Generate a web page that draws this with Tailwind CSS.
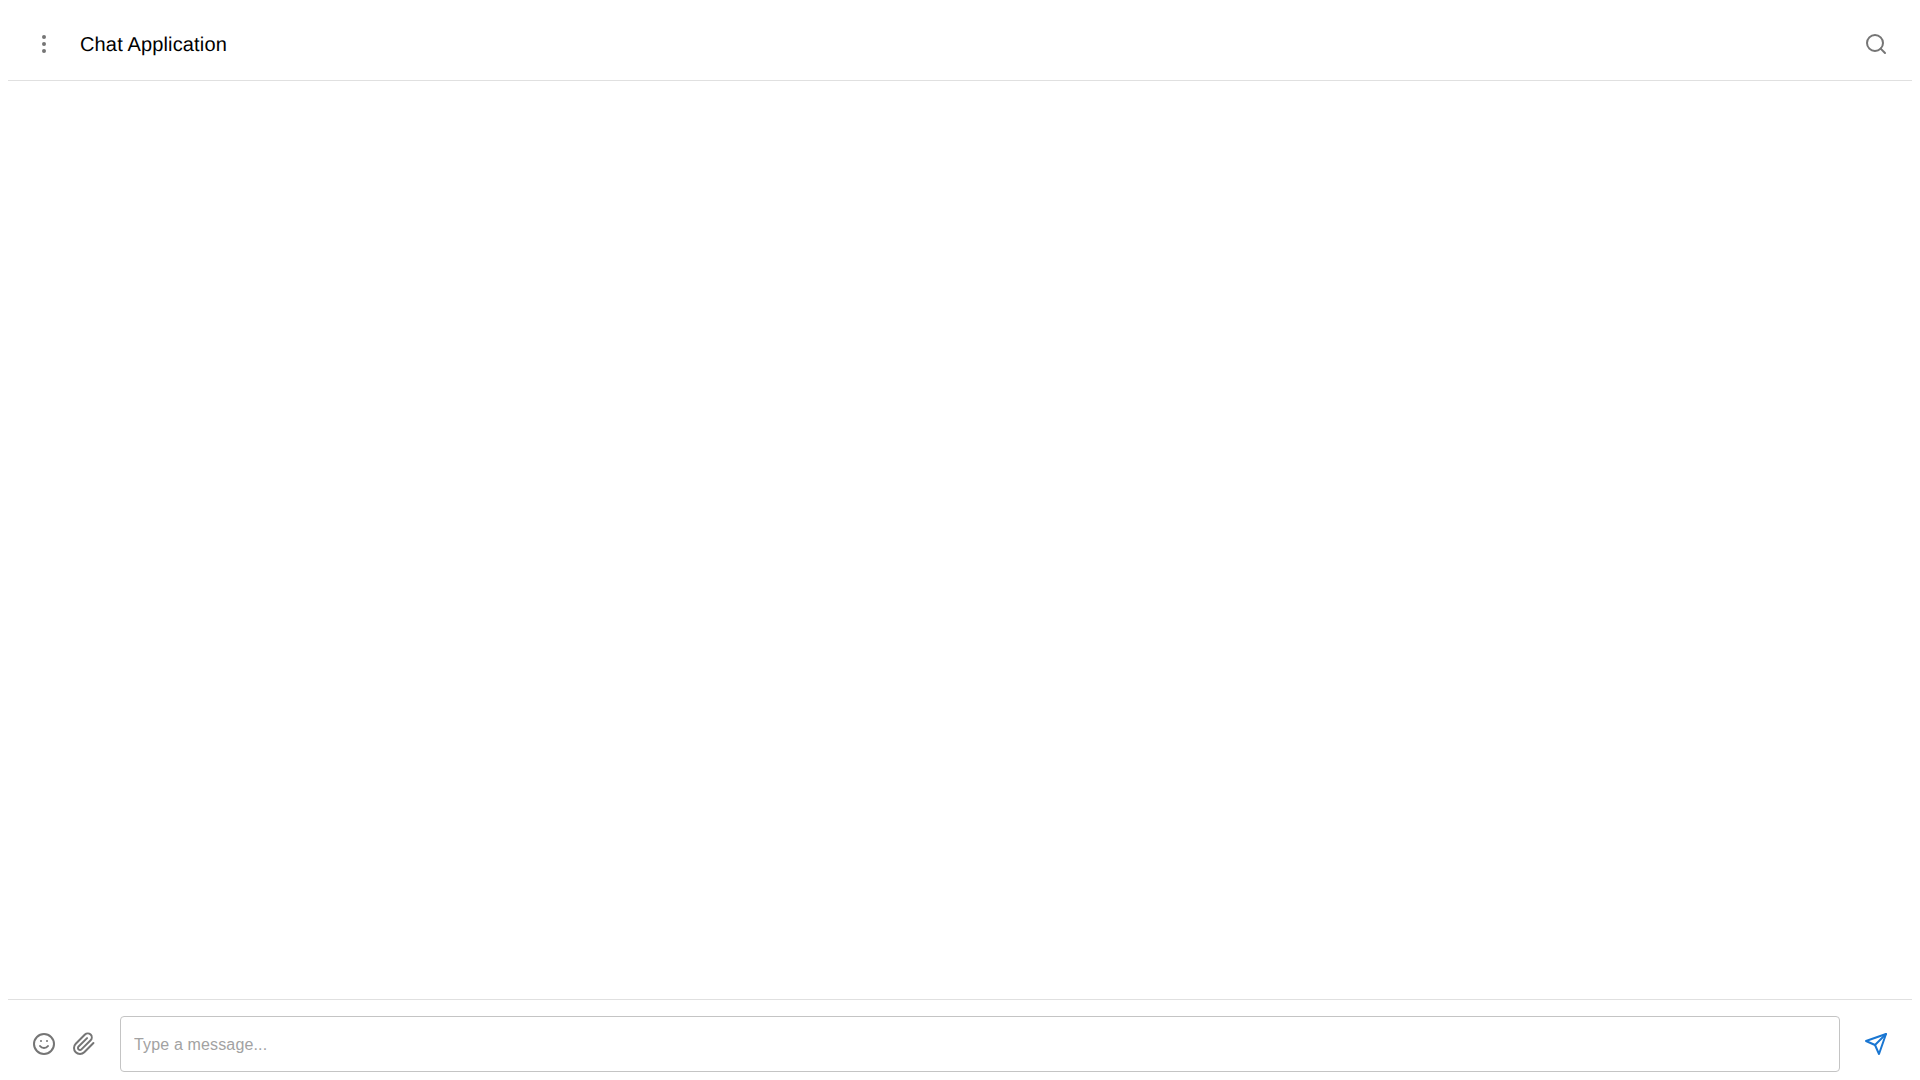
<!DOCTYPE html>
<html lang="en">
<head>
    <meta charset="UTF-8">
    <meta name="viewport" content="width=device-width, initial-scale=1.0">
    <title>Chat Application</title>
    <script src="https://cdn.jsdelivr.net/npm/@tailwindcss/browser@4"></script>
</head>
<body class="bg-white font-['Liberation_Sans',Arial,sans-serif] [text-rendering:geometricPrecision] overflow-hidden">
    <div class="h-screen p-2 pb-0 flex flex-col">
        <!-- header -->
        <header class="h-[73px] shrink-0 flex items-center justify-between px-4 border-b border-[#e0e0e0]">
            <div class="flex items-center gap-4">
                <button class="w-10 h-10 flex items-center justify-center text-[#757575]">
                    <svg class="w-6 h-6" viewBox="0 0 24 24" fill="none" stroke="currentColor" stroke-width="2" stroke-linecap="round" stroke-linejoin="round"><circle cx="12" cy="12" r="1"/><circle cx="12" cy="5" r="1"/><circle cx="12" cy="19" r="1"/></svg>
                </button>
                <h1 class="mt-0.5 text-[20px] leading-6 font-medium tracking-[0.15px] text-black">Chat Application</h1>
            </div>
            <button class="w-10 h-10 flex items-center justify-center text-[#757575]">
                <svg class="w-6 h-6" viewBox="0 0 24 24" fill="none" stroke="currentColor" stroke-width="2" stroke-linecap="round" stroke-linejoin="round"><circle cx="11" cy="11" r="8"/><line x1="21" y1="21" x2="16.65" y2="16.65"/></svg>
            </button>
        </header>

        <!-- messages -->
        <main class="flex-1"></main>

        <!-- input bar -->
        <footer class="h-[81px] shrink-0 flex items-start px-4 pt-4 border-t border-[#e0e0e0]">
            <button class="w-10 h-14 flex items-center justify-center text-[#757575]">
                <svg class="w-6 h-6" viewBox="0 0 24 24" fill="none" stroke="currentColor" stroke-width="2" stroke-linecap="round" stroke-linejoin="round"><circle cx="12" cy="12" r="10"/><path d="M8 14s1.5 2 4 2 4-2 4-2"/><line x1="9" y1="9" x2="9.01" y2="9"/><line x1="15" y1="9" x2="15.01" y2="9"/></svg>
            </button>
            <button class="w-10 h-14 flex items-center justify-center text-[#757575]">
                <svg class="w-6 h-6" viewBox="0 0 24 24" fill="none" stroke="currentColor" stroke-width="2" stroke-linecap="round" stroke-linejoin="round"><path d="M21.44 11.05l-9.19 9.19a6 6 0 0 1-8.49-8.49l9.19-9.19a4 4 0 0 1 5.66 5.66l-9.2 9.19a2 2 0 0 1-2.83-2.83l8.49-8.48"/></svg>
            </button>
            <input type="text" placeholder="Type a message..." class="flex-1 h-14 mx-4 pl-[13px] pr-[13px] pt-px text-base tracking-[0.15px] text-black border border-[#c4c4c4] rounded placeholder:text-[#a2a2a2] outline-none">
            <button class="w-10 h-14 flex items-center justify-center text-[#1976d2]">
                <svg class="w-6 h-6" viewBox="0 0 24 24" fill="none" stroke="currentColor" stroke-width="2" stroke-linecap="round" stroke-linejoin="round"><line x1="22" y1="2" x2="11" y2="13"/><polygon points="22 2 15 22 11 13 2 9 22 2"/></svg>
            </button>
        </footer>
    </div>
</body>
</html>
